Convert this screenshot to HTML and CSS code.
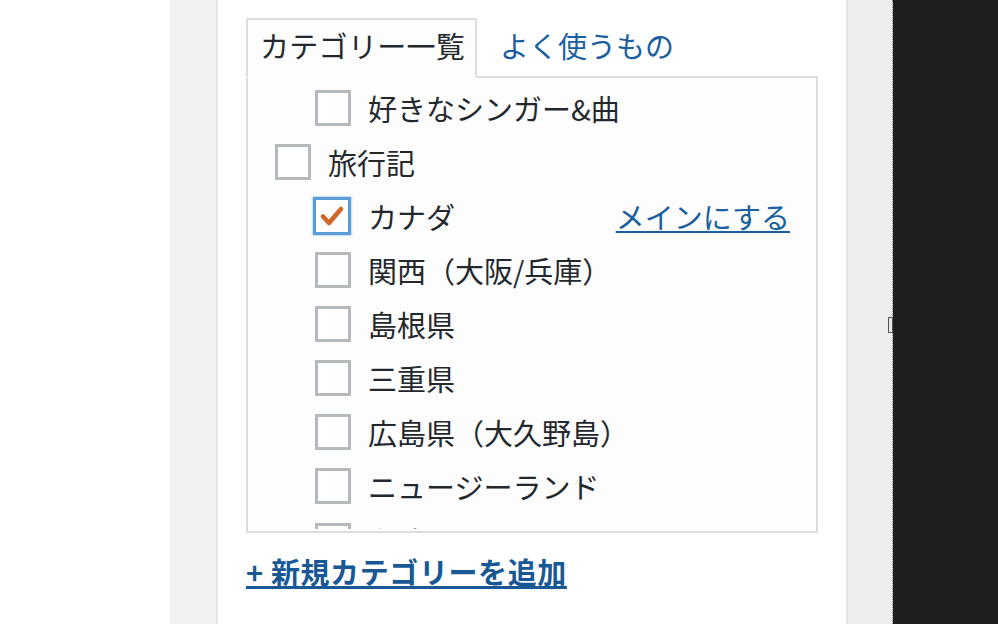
FILE: index.html
```html
<!DOCTYPE html>
<html lang="ja">
<head>
<meta charset="utf-8">
<link rel="stylesheet" href="styles.css">
</head>
<body>
<div class="page">
  <div class="blank"></div>
  <div class="gutter"></div>
  <main class="box">
    <div class="tabs">
      <div class="tab active">カテゴリー一覧</div>
      <a class="tab link" href="#">よく使うもの</a>
    </div>
    <div class="panel">
      <ul class="list">
        <li class="item child"><span class="cb"></span><span class="label">好きなシンガー&amp;曲</span></li>
        <li class="item"><span class="cb"></span><span class="label">旅行記</span></li>
        <li class="item child"><span class="cb checked"><svg viewBox="0 0 36 36" width="36" height="36"><path d="M9 18.5 L15 25 L27 11" fill="none" stroke="#d3672a" stroke-width="4.6" stroke-linecap="round" stroke-linejoin="round"/></svg></span><span class="label">カナダ</span><a class="make-main" href="#">メインにする</a></li>
        <li class="item child"><span class="cb"></span><span class="label">関西（大阪/兵庫）</span></li>
        <li class="item child"><span class="cb"></span><span class="label">島根県</span></li>
        <li class="item child"><span class="cb"></span><span class="label">三重県</span></li>
        <li class="item child"><span class="cb"></span><span class="label">広島県（大久野島）</span></li>
        <li class="item child"><span class="cb"></span><span class="label">ニュージーランド</span></li>
        <li class="item child partial"><span class="cb"></span><span class="label">台湾</span></li>
      </ul>
    </div>
    <a class="add" href="#">+ 新規カテゴリーを追加</a>
  </main>
  <div class="side">
    <span class="handle"></span>
  </div>
  <div class="dark"></div>
</div>
</body>
</html>
```
FILE: styles.css
```css
html, body {
  margin: 0;
  padding: 0;
  background: #ffffff;
  font-family: "Noto Sans CJK JP", "Noto Sans", sans-serif;
}
.page {
  display: flex;
  width: 998px;
  height: 624px;
  overflow: hidden;
}
.blank {
  width: 170px;
  flex: none;
  background: #ffffff;
}
.gutter {
  width: 46px;
  flex: none;
  background: #f1f1f1;
  border-right: 2px solid #e6e6e6;
}
.box {
  width: 600px;
  flex: none;
  background: #ffffff;
  padding: 18px 0 0 28px;
  border-right: 2px solid #e2e2e2;
}
.tabs {
  display: flex;
  align-items: flex-start;
  position: relative;
  z-index: 1;
  margin-bottom: -2px;
}
.tab {
  font-size: 29px;
  line-height: 32px;
  color: #23282d;
  text-decoration: none;
}
.tab.active {
  width: 215px;
  height: 47px;
  padding: 9px 0 0 12px;
  border: 2px solid #dddddd;
  border-bottom: 2px solid #fdfdfd;
  background: #fdfdfd;
  box-sizing: content-box;
  letter-spacing: 0.3px;
}
.tab.link {
  color: #1a609e;
  padding: 11px 0 0 23px;
}
.panel {
  width: 568px;
  height: 453px;
  border: 2px solid #dddddd;
  background: #fdfdfd;
  overflow: hidden;
}
.list {
  list-style: none;
  margin: 0;
  padding: 3px 0 0 27px;
}
.item {
  display: flex;
  align-items: center;
  height: 54px;
  font-size: 29px;
  color: #23282d;
}
.item.child {
  padding-left: 40px;
}
.item.partial {
  align-items: flex-start;
  padding-top: 10px;
  height: 6px;
  overflow: hidden;
}
.cb {
  width: 30px;
  height: 30px;
  flex: none;
  border: 3px solid #b4b9be;
  background: #ffffff;
  margin-right: 17px;
  display: flex;
  align-items: center;
  justify-content: center;
}
.cb.checked {
  width: 32px;
  height: 32px;
  border: 3px solid #5b9dd9;
  margin-left: -2px;
  margin-right: 17px;
  box-shadow: 0 0 2px rgba(30, 140, 190, 0.6);
}
.cb.checked svg {
  flex: none;
}
.label {
  white-space: nowrap;
  line-height: 36px;
}
.make-main {
  margin-left: auto;
  margin-right: 26px;
  color: #1a609e;
  text-decoration: underline;
  text-decoration-thickness: 2px;
  text-underline-offset: 2px;
  font-size: 29px;
  line-height: 36px;
}
.add {
  display: inline-block;
  margin-top: 18px;
  font-size: 29px;
  font-weight: bold;
  letter-spacing: 0.6px;
  color: #175895;
  text-decoration: underline;
  text-decoration-thickness: 3px;
  text-underline-offset: 2px;
  line-height: 40px;
}
.side {
  width: 44px;
  flex: none;
  background: #eeeeee;
  border-right: 1px dotted #8a8a8a;
  position: relative;
}
.handle {
  position: absolute;
  right: -1px;
  top: 317px;
  width: 3px;
  height: 14px;
  border: 1px solid #555555;
  background: #e8e8e8;
}
.dark {
  flex: 1;
  background: #1e1e1e;
}
```
